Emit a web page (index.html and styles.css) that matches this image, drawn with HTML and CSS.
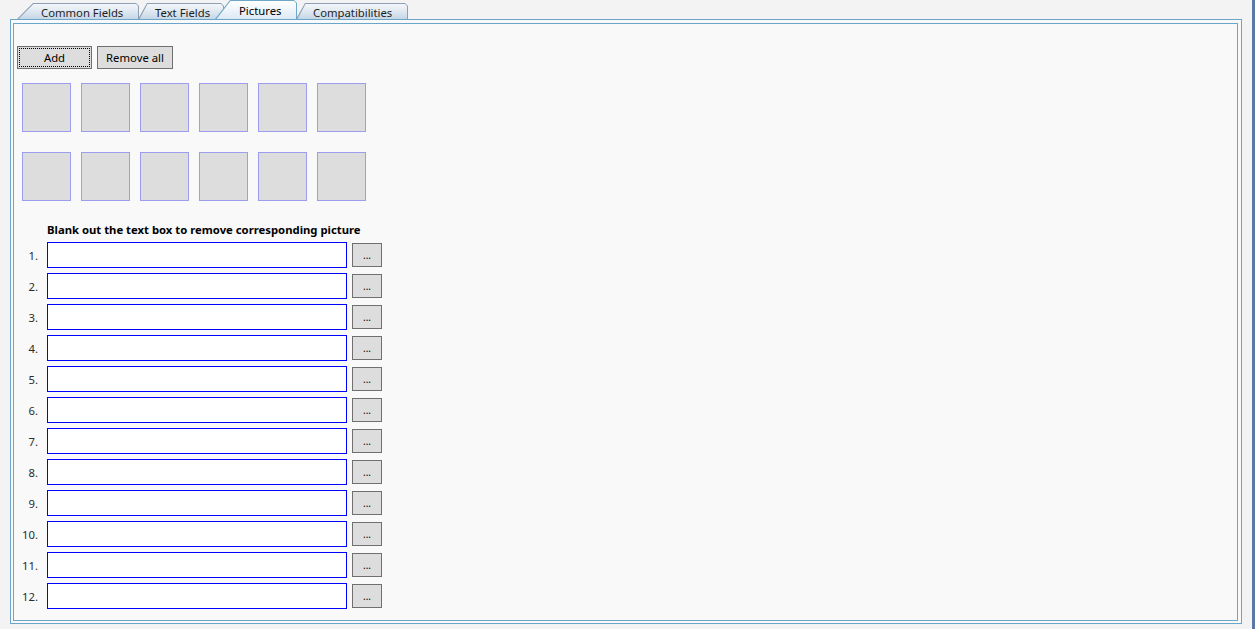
FILE: index.html
```html
<!DOCTYPE html>
<html lang="en">

<head>
    <meta charset="UTF-8">
    <meta name="viewport" content="width=device-width, initial-scale=1.0">
    <title>Pictures</title>
    <link rel="stylesheet" href="styles.css">
</head>

<body>
    <div class="window">
        <div class="main">
            <div class="tabs">
                <div class="tab tab-common">Common Fields</div>
                <div class="tab tab-text">Text Fields</div>
                <div class="tab tab-pictures selected">Pictures</div>
                <div class="tab tab-compat">Compatibilities</div>
            </div>

            <div class="panel">
                <div class="panel-inner">
                    <div class="toolbar">
                        <button class="btn btn-add">Add</button>
                        <button class="btn btn-remove">Remove all</button>
                    </div>

                    <div class="thumbs">
                        <div class="thumb"></div>
                        <div class="thumb"></div>
                        <div class="thumb"></div>
                        <div class="thumb"></div>
                        <div class="thumb"></div>
                        <div class="thumb"></div>
                        <div class="thumb"></div>
                        <div class="thumb"></div>
                        <div class="thumb"></div>
                        <div class="thumb"></div>
                        <div class="thumb"></div>
                        <div class="thumb"></div>
                    </div>

                    <div class="hint">Blank out the text box to remove corresponding picture</div>

                    <div class="rows">
                        <div class="row"><span class="num">1.</span><input type="text" class="path"><button class="browse">...</button></div>
                        <div class="row"><span class="num">2.</span><input type="text" class="path"><button class="browse">...</button></div>
                        <div class="row"><span class="num">3.</span><input type="text" class="path"><button class="browse">...</button></div>
                        <div class="row"><span class="num">4.</span><input type="text" class="path"><button class="browse">...</button></div>
                        <div class="row"><span class="num">5.</span><input type="text" class="path"><button class="browse">...</button></div>
                        <div class="row"><span class="num">6.</span><input type="text" class="path"><button class="browse">...</button></div>
                        <div class="row"><span class="num">7.</span><input type="text" class="path"><button class="browse">...</button></div>
                        <div class="row"><span class="num">8.</span><input type="text" class="path"><button class="browse">...</button></div>
                        <div class="row"><span class="num">9.</span><input type="text" class="path"><button class="browse">...</button></div>
                        <div class="row"><span class="num">10.</span><input type="text" class="path"><button class="browse">...</button></div>
                        <div class="row"><span class="num">11.</span><input type="text" class="path"><button class="browse">...</button></div>
                        <div class="row"><span class="num">12.</span><input type="text" class="path"><button class="browse">...</button></div>
                    </div>
                </div>
            </div>
        </div>
        <div class="edge"></div>
    </div>
</body>

</html>
```

FILE: styles.css
```css
body {
    margin: 0;
    background-color: #f3f3f3;
    font-family: 'Noto Sans', 'Open Sans', sans-serif;
    font-size: 11.3px;
    color: #000;
}

.window {
    display: flex;
    height: 629px;
}

.main {
    flex: 1;
    display: flex;
    flex-direction: column;
}

.edge {
    width: 3px;
    background-color: #5a77a8;
}

/* tab strip */

.tabs {
    display: flex;
    align-items: flex-end;
    height: 19px;
    padding-left: 17px;
}

.tab {
    --slant: 9px;
    position: relative;
    box-sizing: border-box;
    height: 16px;
    padding-top: 2px;
    line-height: 16px;
    font-size: 11.3px;
    color: #1e1e1e;
    white-space: nowrap;
    background-color: #8c9fb5;
    clip-path: polygon(0 100%, var(--slant) 0, calc(100% - 3px) 0, 100% 3px, 100% 100%);
}

.tab::before {
    content: "";
    position: absolute;
    top: 1px;
    left: 1px;
    right: 1px;
    bottom: 0;
    z-index: -1;
    background: linear-gradient(#f4f7fa, #e3ebf3 40%, #c6d6e6);
    clip-path: polygon(0.5px 100%, calc(var(--slant) - 0.5px) 0, calc(100% - 2px) 0, 100% 2px, 100% 100%);
}

.tab-common {
    --slant: 16px;
    width: 122px;
    padding-left: 24px;
    z-index: 4;
}

.tab-text {
    width: 86px;
    margin-left: -1px;
    padding-left: 17px;
    z-index: 3;
}

.tab-pictures {
    --slant: 15px;
    width: 82px;
    margin-left: -9px;
    padding-left: 24px;
    z-index: 5;
}

.tab-compat {
    width: 112px;
    margin-left: -1px;
    padding-left: 17px;
    z-index: 1;
}

.tab.selected {
    height: 19px;
    line-height: 17px;
    background-color: #6ea8c9;
    color: #000;
}

.tab.selected::before {
    background: linear-gradient(#ffffff, #f2f7fb 40%, #dce9f4);
}

/* page panel */

.panel {
    flex: 1;
    display: flex;
    margin: 0 10px 5px 10px;
    padding: 3px 3px 2px 2px;
    border: 1px solid #6aa6c9;
    background-color: #f9f9f9;
}

.panel-inner {
    flex: 1;
    border: 1px solid #6aa6c9;
}

.toolbar {
    display: flex;
    gap: 5px;
    margin-top: 22px;
    padding-left: 3px;
}

.btn {
    box-sizing: border-box;
    height: 23px;
    padding: 0;
    font-family: inherit;
    font-size: 11.3px;
    color: #000;
    background-color: #dddddd;
    border: 1px solid #707070;
}

.btn-add {
    width: 75px;
    outline: 1px dotted #000;
    outline-offset: -3px;
}

.btn-remove {
    width: 76px;
}

.thumbs {
    display: grid;
    grid-template-columns: repeat(6, 49px);
    grid-auto-rows: 49px;
    column-gap: 10px;
    row-gap: 20px;
    margin-top: 14px;
    padding-left: 8px;
}

.thumb {
    box-sizing: border-box;
    background-color: #dddddd;
    border: 1px solid #9d9df0;
}

.hint {
    margin-top: 21px;
    padding-left: 33px;
    line-height: 16px;
    font-weight: bold;
}

.rows {
    margin-top: 4px;
}

.row {
    display: flex;
    align-items: center;
    height: 26px;
    margin-bottom: 5px;
}

.num {
    width: 24px;
    text-align: right;
    color: #2b2b2b;
}

.path {
    box-sizing: border-box;
    width: 300px;
    height: 26px;
    margin: 0 0 0 9px;
    padding: 0 3px;
    border: 1px solid #0000ff;
    background-color: #fff;
    outline: none;
}

.browse {
    box-sizing: border-box;
    width: 30px;
    height: 24px;
    margin-left: 5px;
    padding: 0;
    font-family: inherit;
    font-size: 10px;
    color: #000;
    background-color: #dddddd;
    border: 1px solid #707070;
}
```
